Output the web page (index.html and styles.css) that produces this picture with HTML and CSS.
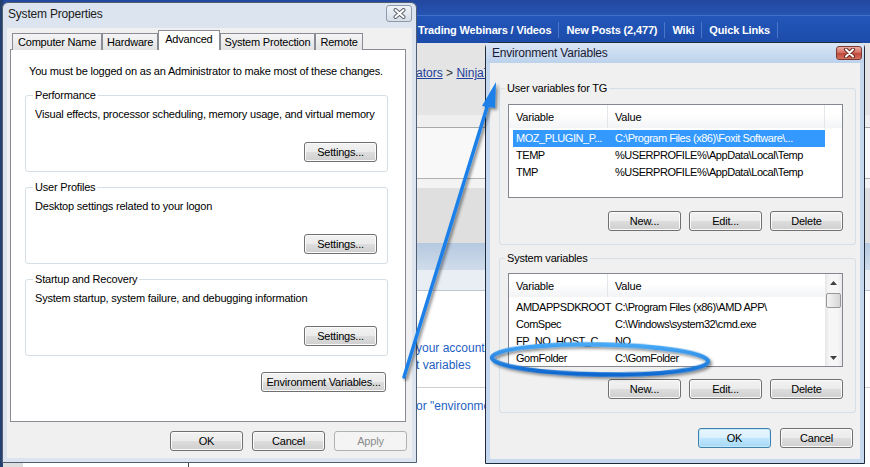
FILE: index.html
```html
<!DOCTYPE html>
<html lang="en">
<head>
    <meta charset="UTF-8">
    <meta name="viewport" content="width=device-width, initial-scale=1.0">
    <title>System Properties</title>
    <link rel="stylesheet" href="styles.css">
</head>
<body>

    <!-- Forum page behind the dialogs -->
    <div class="site">
        <div class="site-top"></div>
        <div class="site-nav">
            <a href="#">Trading Webinars / Videos</a>
            <a href="#">New Posts (2,477)</a>
            <a href="#">Wiki</a>
            <a href="#">Quick Links</a>
        </div>
        <div class="crumbs"><a href="#">ators</a> &gt; <a href="#">NinjaTrader</a></div>
        <div class="band band-light"></div>
        <div class="band band-white"></div>
        <div class="band band-thin"></div>
        <div class="band band-gray"></div>
        <div class="band band-head"></div>
        <div class="band band-sub"></div>
        <div class="post">
            <a href="#">your account settings</a>
            <a href="#">t variables</a>
        </div>
        <div class="site-foot">
            <div class="foot-side"></div>
            <div class="foot-col"></div>
            <div class="foot-main"><a href="#">or "environment variables"</a></div>
        </div>
    </div>

    <!-- System Properties dialog -->
    <div class="window sysprops">
        <div class="titlebar">
            <span class="title">System Properties</span>
            <span class="close">
                <svg width="13" height="11" viewBox="0 0 13 11">
                    <path d="M2.5 2 L10.5 9 M10.5 2 L2.5 9" stroke="#5d6670" stroke-width="4" stroke-linecap="round"/>
                    <path d="M2.5 2 L10.5 9 M10.5 2 L2.5 9" stroke="#fff" stroke-width="2" stroke-linecap="round"/>
                </svg>
            </span>
        </div>
        <div class="client">
            <div class="tabs">
                <span class="tab">Computer Name</span>
                <span class="tab">Hardware</span>
                <span class="tab active">Advanced</span>
                <span class="tab">System Protection</span>
                <span class="tab">Remote</span>
            </div>
            <div class="tab-panel">
                <p class="note">You must be logged on as an Administrator to make most of these changes.</p>

                <fieldset class="group">
                    <legend>Performance</legend>
                    <p>Visual effects, processor scheduling, memory usage, and virtual memory</p>
                    <div class="actions"><button class="btn">Settings...</button></div>
                </fieldset>

                <fieldset class="group">
                    <legend>User Profiles</legend>
                    <p>Desktop settings related to your logon</p>
                    <div class="actions"><button class="btn">Settings...</button></div>
                </fieldset>

                <fieldset class="group">
                    <legend>Startup and Recovery</legend>
                    <p>System startup, system failure, and debugging information</p>
                    <div class="actions"><button class="btn">Settings...</button></div>
                </fieldset>

                <div class="actions env-row">
                    <button class="btn btn-wide">Environment Variables...</button>
                </div>
            </div>
            <div class="actions dialog-actions">
                <button class="btn">OK</button>
                <button class="btn">Cancel</button>
                <button class="btn" disabled>Apply</button>
            </div>
        </div>
    </div>

    <!-- Environment Variables dialog -->
    <div class="window envvars">
        <div class="titlebar">
            <span class="title">Environment Variables</span>
            <span class="close close-red">
                <svg width="13" height="10" viewBox="0 0 13 10">
                    <path d="M3 1.5 L10 8.5 M10 1.5 L3 8.5" stroke="#6b2a22" stroke-width="4" stroke-linecap="round"/>
                    <path d="M3 1.5 L10 8.5 M10 1.5 L3 8.5" stroke="#fff" stroke-width="2" stroke-linecap="round"/>
                </svg>
            </span>
        </div>
        <div class="client">
            <fieldset class="group group-env">
                <legend>User variables for TG</legend>
                <div class="listview">
                    <div class="lv-main">
                        <div class="lv-head"><span>Variable</span><span>Value</span><span></span></div>
                        <div class="lv-row selected"><span>MOZ_PLUGIN_P...</span><span>C:\Program Files (x86)\Foxit Software\...</span></div>
                        <div class="lv-row"><span>TEMP</span><span>%USERPROFILE%\AppData\Local\Temp</span></div>
                        <div class="lv-row"><span>TMP</span><span>%USERPROFILE%\AppData\Local\Temp</span></div>
                    </div>
                </div>
                <div class="actions">
                    <button class="btn">New...</button>
                    <button class="btn">Edit...</button>
                    <button class="btn">Delete</button>
                </div>
            </fieldset>

            <fieldset class="group group-env second">
                <legend>System variables</legend>
                <div class="listview">
                    <div class="lv-main">
                        <div class="lv-head"><span>Variable</span><span>Value</span></div>
                        <div class="lv-row"><span>AMDAPPSDKROOT</span><span>C:\Program Files (x86)\AMD APP\</span></div>
                        <div class="lv-row"><span>ComSpec</span><span>C:\Windows\system32\cmd.exe</span></div>
                        <div class="lv-row"><span>FP_NO_HOST_C...</span><span>NO</span></div>
                        <div class="lv-row"><span>GomFolder</span><span>C:\GomFolder</span></div>
                    </div>
                    <div class="scrollbar">
                        <span class="sb-arrow">
                            <svg width="7" height="4" viewBox="0 0 7 4"><polygon points="3.5,0 7,4 0,4" fill="#404040"/></svg>
                        </span>
                        <span class="sb-thumb"></span>
                        <span class="sb-track"></span>
                        <span class="sb-arrow">
                            <svg width="7" height="4" viewBox="0 0 7 4"><polygon points="0,0 7,0 3.5,4" fill="#404040"/></svg>
                        </span>
                    </div>
                </div>
                <div class="actions">
                    <button class="btn">New...</button>
                    <button class="btn">Edit...</button>
                    <button class="btn">Delete</button>
                </div>
            </fieldset>

            <div class="actions dialog-actions">
                <button class="btn btn-default">OK</button>
                <button class="btn">Cancel</button>
            </div>
        </div>
    </div>

    <!-- Hand-drawn arrow and ring -->
    <svg class="markup" width="870" height="467" viewBox="0 0 870 467">
        <defs>
            <filter id="shade" x="-20%" y="-20%" width="140%" height="140%">
                <feDropShadow dx="2" dy="2" stdDeviation="1.5" flood-color="#000" flood-opacity="0.45"/>
            </filter>
            <linearGradient id="ring" x1="0" y1="0" x2="0" y2="1">
                <stop offset="0" stop-color="#46a8f6"/>
                <stop offset="1" stop-color="#0f68cf"/>
            </linearGradient>
        </defs>
        <g filter="url(#shade)">
            <line x1="404" y1="377" x2="488" y2="104" stroke="#1b80e8" stroke-width="3.5" stroke-linecap="round"/>
            <polygon points="496,82 482,106 495,108" fill="#1b80e8"/>
            <ellipse cx="600" cy="359.5" rx="108" ry="15" fill="none" stroke="url(#ring)" stroke-width="4.5" transform="rotate(1 600 359.5)"/>
        </g>
    </svg>

</body>
</html>
```

FILE: styles.css
```css
/* Global styling */
* {
    box-sizing: border-box;
}

body {
    margin: 0;
    width: 870px;
    height: 467px;
    overflow: hidden;
    position: relative;
    background: #24406f;
    font-family: "Liberation Sans", Arial, sans-serif;
    font-size: 11px;
    color: #000;
}

p {
    margin: 0;
}

/* Forum page */
.site {
    margin-left: 3px;
    height: 467px;
    background: #fff;
}

.site-top {
    height: 15px;
    background: linear-gradient(#22489f, #2654b3);
}

.site-nav {
    height: 28px;
    border-top: 1px solid #4171c9;
    background: linear-gradient(#2256b8, #1c4cab);
    display: flex;
    align-items: center;
    padding-left: 408px;
}

.site-nav a {
    color: #fff;
    font-weight: bold;
    text-decoration: none;
    padding: 0 7px;
    line-height: 16px;
    border-right: 1px solid #4a76c8;
    white-space: nowrap;
    letter-spacing: -0.15px;
}

.crumbs {
    height: 72px;
    background: #e4e4e4;
    padding: 23px 0 0 413px;
    font-size: 12px;
    line-height: 14px;
    color: #333;
    white-space: nowrap;
}

.crumbs a {
    color: #22409a;
}

.band-light {
    height: 13px;
    background: #efefef;
    border-bottom: 1px solid #a9a9a9;
}

.band-white {
    height: 51px;
    background: #f8f8f8;
    border-bottom: 1px solid #b0b0b0;
}

.band-thin {
    height: 9px;
    background: #f3f3f3;
}

.band-gray {
    height: 55px;
    background: #dfdfdf;
}

.band-head {
    height: 27px;
    background: linear-gradient(#b5c9e0, #d0dcea);
}

.band-sub {
    height: 21px;
    background: #e9eef4;
    border-bottom: 1px solid #bcc7d3;
}

.post {
    height: 97px;
    padding: 49px 0 0 413px;
    border-bottom: 1px solid #cfcfcf;
}

.post a,
.foot-main a {
    display: block;
    font-size: 12px;
    line-height: 17px;
    color: #1f5fc4;
    text-decoration: none;
    white-space: nowrap;
}

.site-foot {
    display: flex;
    height: 79px;
}

.foot-side {
    width: 20px;
    background: #dedede;
}

.foot-col {
    width: 166px;
    border-right: 1px solid #4a4a4a;
}

.foot-main {
    flex: 1;
    padding: 10px 0 0 227px;
}

/* Dialog windows */
.window {
    position: absolute;
    display: flex;
    flex-direction: column;
    padding: 0 4px 4px;
    border: 1px solid #4f5e72;
    border-radius: 6px 6px 0 0;
    background: #dbe4ef;
    letter-spacing: -0.2px;
}

.sysprops {
    left: 2px;
    top: 2px;
    width: 415px;
    height: 461px;
}

.envvars {
    left: 485px;
    top: 42px;
    width: 380px;
    height: 422px;
    border-color: #1d2b3c;
    background: #c6d8ee;
}

.titlebar {
    display: flex;
    justify-content: space-between;
    align-items: flex-start;
    height: 25px;
    padding-left: 1px;
}

.title {
    font-size: 12px;
    line-height: 15px;
    padding-top: 4px;
    color: #1c1c1c;
}

.envvars .titlebar {
    height: 20px;
    margin: 0 -4px;
    padding: 0 2px 0 6px;
    background: linear-gradient(#dae6f5, #bcd2eb);
}

.envvars .title {
    padding-top: 3px;
    color: #1a1a33;
}

.close {
    width: 26px;
    height: 17px;
    margin-top: 2px;
    display: flex;
    align-items: center;
    justify-content: center;
    border: 1px solid #8d9aab;
    border-radius: 3px;
    background: linear-gradient(#f1f4f8, #d6dee8);
}

.close-red {
    height: 14px;
    margin-top: 3px;
    border-color: #7a3a32;
    background: linear-gradient(#eab0a4, #d26a5c 50%, #c0473a 51%, #d4705f);
}

.client {
    flex: 1;
    background: #f0f0f0;
}

.sysprops .client {
    padding: 2px 5px 0 3px;
}

.envvars .client {
    padding: 18px 4px 0 9px;
}

/* Tabs */
.tabs {
    display: flex;
    align-items: flex-end;
    height: 20px;
    padding-left: 2px;
    margin-bottom: -1px;
    position: relative;
    z-index: 1;
}

.tab {
    height: 17px;
    line-height: 17px;
    padding: 0 4px;
    border: 1px solid #898c95;
    border-bottom: none;
    background: linear-gradient(#f5f5f5, #e3e3e3);
    white-space: nowrap;
}

.tab:first-child {
    padding: 0 5px;
}

.tab.active {
    height: 20px;
    line-height: 16px;
    padding: 0 6px;
    background: #fff;
}

.tab-panel {
    height: 373px;
    margin-right: 1px;
    padding: 14px 17px 0 14px;
    background: #fff;
    border: 1px solid #898c95;
}

.note {
    line-height: 15px;
    padding-left: 4px;
    white-space: nowrap;
}

/* Group boxes (legend sits inside the left padding) */
.group {
    margin: 8px 0 0;
    padding: 0 10px 9px 9px;
    min-width: 0;
    border: 1px solid #d5dfe5;
    border-radius: 3px;
}

.tab-panel .group:first-of-type {
    margin-top: 9px;
}

.group legend {
    margin-left: -2px;
    padding: 0 2px;
    line-height: 15px;
}

.group p {
    margin-top: 4px;
    line-height: 15px;
    white-space: nowrap;
}

.group .actions {
    margin-top: 20px;
}

.group-env {
    margin: 0;
    padding: 0 12px 13px 8px;
}

.group-env legend {
    margin-left: -3px;
}

.group-env.second {
    margin-top: 6px;
}

.group-env .actions {
    margin-top: 13px;
}

.group-env.second .actions {
    margin-top: 12px;
}

/* Buttons */
.actions {
    display: flex;
    justify-content: flex-end;
    gap: 8px;
}

.env-row {
    margin-top: 16px;
    margin-right: 2px;
}

.dialog-actions {
    margin-top: 9px;
    gap: 9px;
}

.envvars .dialog-actions {
    margin-top: 15px;
    margin-right: 3px;
}

.btn {
    width: 73px;
    height: 20px;
    padding: 0;
    font-family: inherit;
    font-size: 11px;
    letter-spacing: -0.2px;
    color: #000;
    border: 1px solid #707070;
    border-radius: 3px;
    background: linear-gradient(#f2f2f2, #ebebeb 50%, #dddddd 51%, #cfcfcf);
    box-shadow: inset 0 0 0 1px #fbfbfb;
}

.btn-wide {
    width: 125px;
}

.btn-default {
    border-color: #3c7fb1;
    background: linear-gradient(#eaf6fd, #d9f0fc 50%, #bee6fd 51%, #a7d9f5);
    box-shadow: inset 0 0 0 1px #c5e8fb;
}

.btn:disabled {
    color: #8b8b8b;
    border-color: #adb2b5;
    background: #f4f4f4;
    box-shadow: none;
}

/* List views */
.listview {
    display: flex;
    height: 94px;
    margin-top: 8px;
    border: 1px solid #828790;
    background: #fff;
    overflow: hidden;
}

.second .listview {
    margin-top: 7px;
}

.lv-main {
    flex: 1;
}

.lv-head {
    display: grid;
    grid-template-columns: 99px 217px 1fr;
    height: 23px;
    margin-bottom: 2px;
    background: linear-gradient(#fff 40%, #f3f4f6);
}

.lv-head span {
    padding: 2px 0 0 7px;
    line-height: 21px;
    border-right: 1px solid #e3e6ea;
}

.lv-head span:last-child {
    border-right: none;
}

.lv-row {
    display: grid;
    grid-template-columns: 99px 213px;
    width: 312px;
    height: 17px;
    line-height: 17px;
    margin-left: 4px;
    letter-spacing: -0.45px;
}

.lv-row span {
    padding-left: 3px;
    white-space: nowrap;
    overflow: hidden;
}

.lv-row.selected {
    background: #3399ff;
    color: #fff;
}

/* Scroll bar */
.scrollbar {
    width: 17px;
    display: flex;
    flex-direction: column;
    align-items: center;
    background: linear-gradient(90deg, #e6e6e6, #f6f6f6 25%, #f6f6f6 75%, #e9e9e9);
}

.sb-arrow {
    height: 17px;
    display: flex;
    align-items: center;
}

.sb-thumb {
    width: 15px;
    height: 15px;
    margin-top: 2px;
    border: 1px solid #979797;
    border-radius: 2px;
    background: linear-gradient(90deg, #f3f3f3, #e6e6e6 50%, #d6d6d6);
}

.sb-track {
    flex: 1;
}

/* Annotation layer */
.markup {
    position: absolute;
    left: 0;
    top: 0;
    pointer-events: none;
}
```
